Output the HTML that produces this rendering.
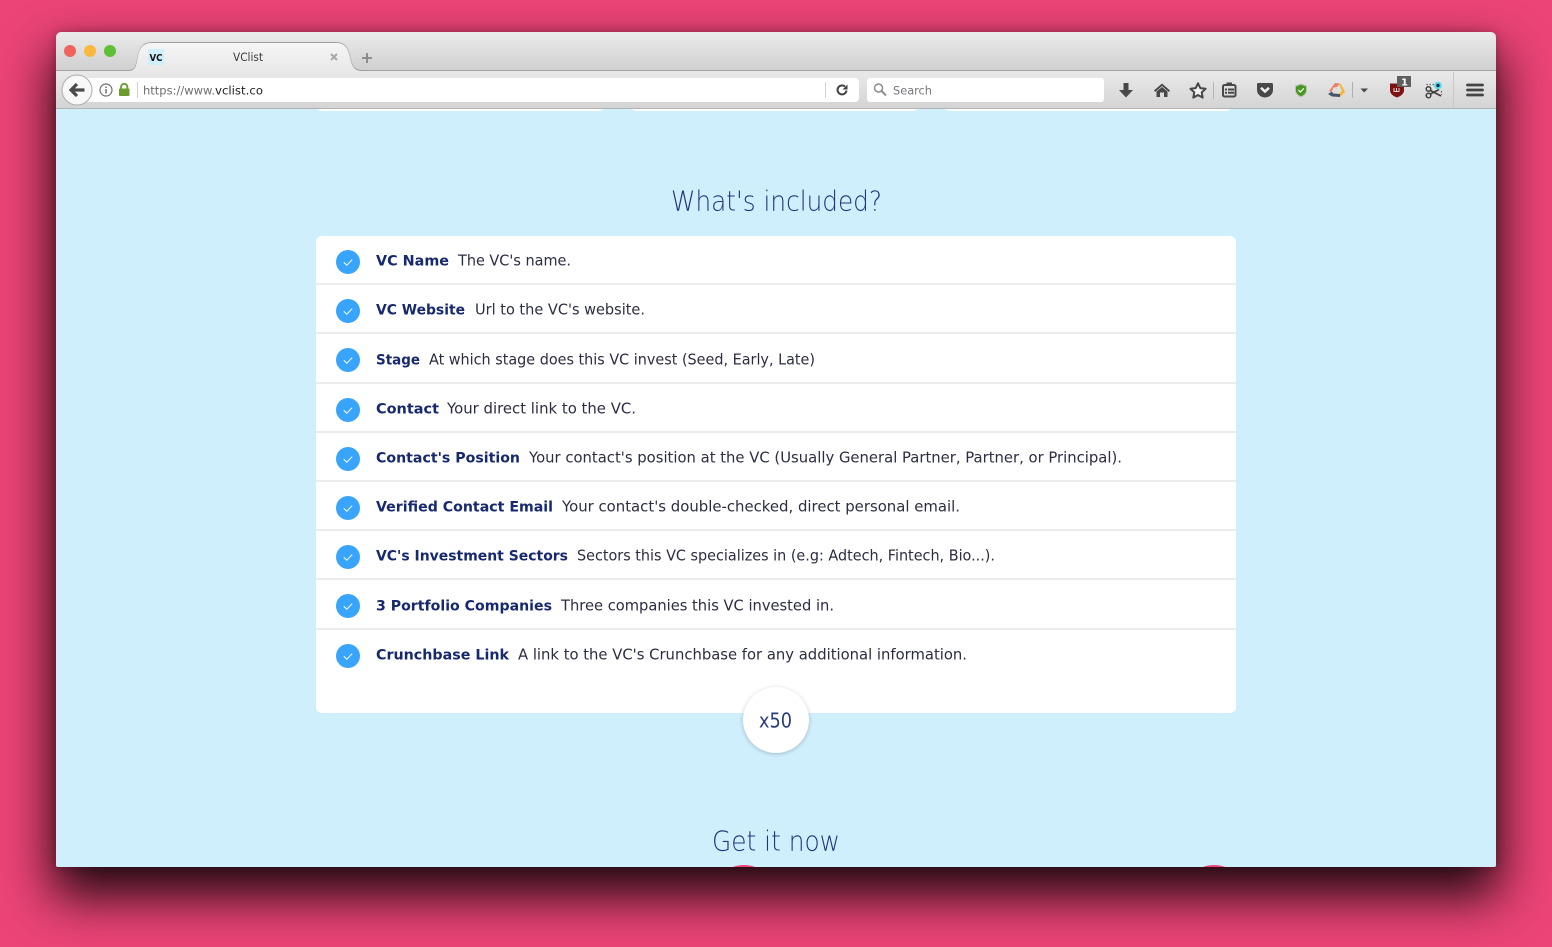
<!DOCTYPE html>
<html><head><meta charset="utf-8"><title>VClist</title>
<style>
html,body{margin:0;padding:0;width:1552px;height:947px;overflow:hidden;background:#ec4477}
#win{position:absolute;left:56px;top:32px;width:1440px;height:835px;border-radius:5px 5px 2px 2px;box-shadow:0 26px 50px 4px rgba(0,0,0,.86),0 0 10px rgba(60,0,20,.3)}
svg{position:absolute;left:0;top:0}
text{font-family:"DejaVu Sans","Liberation Sans",sans-serif}
.b{font-weight:700;font-size:14.5px;fill:#17296e}
.r{font-size:14.8px;fill:#2b2d42}
.h{font-size:27.5px;font-weight:200;fill:#22347a}
</style></head><body>
<div id="win"></div>
<svg width="1552" height="947" viewBox="0 0 1552 947">
<defs>
<linearGradient id="tb" x1="0" y1="0" x2="0" y2="1"><stop offset="0" stop-color="#ebebeb"/><stop offset="1" stop-color="#d0d0d0"/></linearGradient>
<linearGradient id="nb" x1="0" y1="0" x2="0" y2="1"><stop offset="0" stop-color="#eaeaea"/><stop offset="1" stop-color="#d4d4d4"/></linearGradient>
<linearGradient id="tab" x1="0" y1="0" x2="0" y2="1"><stop offset="0" stop-color="#f5f5f5"/><stop offset="1" stop-color="#e9e9e9"/></linearGradient>
<clipPath id="cw"><path d="M61 32H1491a5 5 0 0 1 5 5V865a2 2 0 0 1-2 2H58a2 2 0 0 1-2-2V37a5 5 0 0 1 5-5Z"/></clipPath>
<g id="chk"><circle r="12" fill="#38a4fb"/><path d="M-4.200 .3L-1.200 3.200L4.200-2.400" fill="none" stroke="#e8f4fe" stroke-width="1.100"/></g>
</defs>
<g clip-path="url(#cw)">
<rect x="56" y="109" width="1440" height="758" fill="#cfeffd"/>
<rect x="56" y="32" width="1440" height="38" fill="url(#tb)"/>
<rect x="56" y="70" width="1440" height="38" fill="url(#nb)"/>
<rect x="56" y="70" width="1440" height="1" fill="#9f9f9f"/>
<rect x="56" y="108" width="1440" height="1" fill="#b4b4b4"/>
<path d="M316 109H604L600 111H322Z" fill="#fff"/>
<path d="M630 109H918L914 111H636Z" fill="#fff"/>
<path d="M944 109H1231L1227 111H950Z" fill="#fff"/>
<ellipse cx="744" cy="873" rx="17" ry="8" fill="#ec4477"/>
<ellipse cx="1214" cy="873" rx="17" ry="8" fill="#ec4477"/>
</g>
<circle cx="70" cy="51" r="6" fill="#f0645c"/><circle cx="90" cy="51" r="6" fill="#f8b93c"/><circle cx="110" cy="51" r="6" fill="#5fc038"/>
<path d="M56 70.500H129C135 70.500 136 66 137 61C139 50 141 42.500 152 42.500H336C345 42.500 348 48 350 58C352 66 354 70.500 362 70.500H1496" fill="none" stroke="#a0a0a0"/>
<path d="M129 71C135 71 136 66 137 61C139 50 141 43 152 43H336C345 43 348 48 350 58C352 66 354 71 362 71Z" fill="url(#tab)"/>
<rect x="148" y="49" width="16" height="16" fill="#cfeffd"/>
<text x="149.500" y="61" font-size="10" font-weight="700" fill="#111" textLength="13" lengthAdjust="spacingAndGlyphs">VC</text>
<text x="233" y="61" font-size="11.500" fill="#3c3c3c" textLength="30" lengthAdjust="spacingAndGlyphs">VClist</text>
<path d="M331 54L337 60M337 54L331 60" stroke="#a8a8a8" stroke-width="2"/>
<path d="M367 53V63M362 58H372" stroke="#858585" stroke-width="1.800"/>
<path d="M80 78H855a4 4 0 0 1 4 4V98a4 4 0 0 1-4 4H80Z" fill="#fff"/>
<circle cx="77" cy="90" r="15" fill="#f8f8f8" stroke="#adadad"/>
<path d="M84.500 90H72M77 84L71 90L77 96" fill="none" stroke="#4a4a4a" stroke-width="3.200"/>
<circle cx="106" cy="90" r="6" fill="none" stroke="#707070" stroke-width="1.200"/>
<rect x="105.300" y="89" width="1.500" height="4.500" fill="#707070"/><rect x="105.300" y="86.500" width="1.500" height="1.500" fill="#707070"/>
<rect x="119" y="88.500" width="10.500" height="7.500" rx="1" fill="#6b9a2d"/>
<path d="M121 89V87a3.200 3.200 0 0 1 6.400 0V89" fill="none" stroke="#6b9a2d" stroke-width="1.800"/>
<rect x="137" y="82" width="1" height="16" fill="#cfcfcf"/>
<text x="143" y="94.500" font-size="11.800" fill="#6e6e6e" textLength="72" lengthAdjust="spacingAndGlyphs">https://www.</text>
<text x="215" y="94.500" font-size="11.800" fill="#1e1e1e" textLength="48" lengthAdjust="spacingAndGlyphs">vclist.co</text>
<rect x="825" y="82" width="1" height="16" fill="#d4d4d4"/>
<path d="M846.500 90.500a4.500 4.500 0 1 1-1.500-4" fill="none" stroke="#444" stroke-width="2"/>
<path d="M847.500 84.500V89.500H842.500Z" fill="#444"/>
<rect x="867" y="78" width="237" height="24" rx="3" fill="#fff"/>
<circle cx="878.500" cy="88" r="4" fill="none" stroke="#8c8c8c" stroke-width="1.500"/>
<path d="M881.500 91L886 95.500" stroke="#8c8c8c" stroke-width="2"/>
<text x="893" y="94.500" font-size="11.800" fill="#77777c" textLength="39" lengthAdjust="spacingAndGlyphs">Search</text>
<path d="M1123.500 83H1128.500V90H1133L1126 97.500L1119 90H1123.500Z" fill="#484848"/>
<path d="M1154 90.500L1162 83.500L1170 90.500L1168.800 92L1162 86L1155.200 92Z" fill="#484848"/><path d="M1156.500 91.500L1162 87L1167.500 91.500V97H1164V92.500H1160V97H1156.500Z" fill="#484848"/>
<path d="M1198 83.300L1200.300 88.100L1205.600 88.800L1201.700 92.400L1202.700 97.600L1198 95L1193.300 97.600L1194.300 92.400L1190.400 88.800L1195.700 88.100Z" fill="#f2f2f2" stroke="#484848" stroke-width="2" stroke-linejoin="round"/>
<rect x="1213" y="82" width="1" height="17" fill="#b5b5b5"/>
<rect x="1223" y="85" width="12.500" height="11.500" rx="1.500" fill="none" stroke="#484848" stroke-width="2"/>
<path d="M1226.500 82.500H1232V86H1226.500ZM1225 88.500H1227V90.500H1225ZM1228 88.500H1234V90.500H1228ZM1225 91.700H1227V93.700H1225ZM1228 91.700H1234V93.700H1228Z" fill="#484848"/>
<path d="M1258.500 83H1271.500a1.500 1.500 0 0 1 1.500 1.500V90a8 7.500 0 0 1-16 0V84.500a1.500 1.500 0 0 1 1.500-1.500Z" fill="#484848"/>
<path d="M1261 87.800L1265 91.500L1269 87.800" fill="none" stroke="#eee" stroke-width="2.500"/>
<path d="M1301 83.500L1307 85.800V90.500C1307 93.800 1304 96 1301 97.500C1298 96 1295 93.800 1295 90.500V85.800Z" fill="#b9c2b2"/>
<path d="M1301 84.800L1306 86.500V90.500C1306 93 1303.800 95 1301 96.300C1298.200 95 1296 93 1296 90.500V86.500Z" fill="#4a9622"/>
<path d="M1298.500 90L1300.500 92L1303.800 88.300" fill="none" stroke="#e8f6d8" stroke-width="1.300"/>
<path d="M1329 91L1335 83L1340 83.500L1337 87L1333.500 87.500L1331.500 92Z" fill="#ee7d6d"/>
<path d="M1339 84L1341 84L1345 92L1340 97L1339.500 93L1342 91Z" fill="#f6b62e"/>
<path d="M1328 94L1332 91.500L1333 93.500L1340 94V97L1332 96.500Z" fill="#45536b"/>
<rect x="1352" y="82" width="1" height="16" fill="#b0b0b0"/>
<path d="M1360.500 88.500H1368L1364.200 92.500Z" fill="#484848"/>
<path d="M1390 83.500H1404V90C1404 93.800 1401 96 1397 97.500C1393 96 1390 93.800 1390 90Z" fill="#7c1212"/>
<path d="M1394 88V91.500H1399V88M1396.500 88V91" fill="none" stroke="#e6cfcf" stroke-width="1"/>
<rect x="1397" y="76" width="14" height="11" fill="#5f5f5f"/>
<text x="1401" y="85.500" font-size="10" font-weight="700" fill="#fff">1</text>
<circle cx="1428.500" cy="95.500" r="2.300" fill="none" stroke="#3f3f3f" stroke-width="1.500"/>
<circle cx="1428.500" cy="89" r="2.300" fill="none" stroke="#3f3f3f" stroke-width="1.500"/>
<path d="M1430.500 90.500L1441 96M1430.500 94L1439 89.500" stroke="#3f3f3f" stroke-width="1.600"/>
<path d="M1426.500 84.500H1434M1441.500 91V95" stroke="#6c6c6c" stroke-width="1.300" stroke-dasharray="1.500 1.500" fill="none"/>
<circle cx="1438" cy="85.500" r="3.800" fill="#4fdcef"/><circle cx="1438" cy="85.500" r="1.700" fill="#1a2a4a"/>
<rect x="1453" y="72" width="1" height="35" fill="#c8c8c8"/>
<path d="M1467.500 85H1482.500M1467.500 90H1482.500M1467.500 95H1482.500" stroke="#444" stroke-width="2.800" stroke-linecap="round"/>
<text class="h" x="671" y="210.500" textLength="211" lengthAdjust="spacingAndGlyphs">What's included?</text>
<text class="h" x="712" y="850.500" textLength="128" lengthAdjust="spacingAndGlyphs">Get it now</text>
<rect x="316" y="236" width="920" height="477" rx="6" fill="#fff"/>
<g fill="#ececec">
<rect x="316" y="283" width="920" height="2"/><rect x="316" y="332" width="920" height="2"/><rect x="316" y="382" width="920" height="2"/><rect x="316" y="431" width="920" height="2"/><rect x="316" y="480" width="920" height="2"/><rect x="316" y="529" width="920" height="2"/><rect x="316" y="578" width="920" height="2"/><rect x="316" y="628" width="920" height="2"/>
</g>
<use href="#chk" x="348" y="262"/><use href="#chk" x="348" y="311"/><use href="#chk" x="348" y="360"/><use href="#chk" x="348" y="410"/><use href="#chk" x="348" y="459"/><use href="#chk" x="348" y="508"/><use href="#chk" x="348" y="557"/><use href="#chk" x="348" y="606"/><use href="#chk" x="348" y="656"/>
<text class="b" x="376" y="265.500" textLength="73" lengthAdjust="spacingAndGlyphs">VC Name</text><text class="r" x="458" y="265.500" textLength="113" lengthAdjust="spacingAndGlyphs">The VC's name.</text>
<text class="b" x="376" y="314.500" textLength="89" lengthAdjust="spacingAndGlyphs">VC Website</text><text class="r" x="475" y="314.500" textLength="170" lengthAdjust="spacingAndGlyphs">Url to the VC's website.</text>
<text class="b" x="376" y="364.500" textLength="44" lengthAdjust="spacingAndGlyphs">Stage</text><text class="r" x="429" y="364.500" textLength="386" lengthAdjust="spacingAndGlyphs">At which stage does this VC invest (Seed, Early, Late)</text>
<text class="b" x="376" y="413.500" textLength="63" lengthAdjust="spacingAndGlyphs">Contact</text><text class="r" x="447" y="413.500" textLength="189" lengthAdjust="spacingAndGlyphs">Your direct link to the VC.</text>
<text class="b" x="376" y="462.500" textLength="144" lengthAdjust="spacingAndGlyphs">Contact's Position</text><text class="r" x="529" y="462.500" textLength="593" lengthAdjust="spacingAndGlyphs">Your contact's position at the VC (Usually General Partner, Partner, or Principal).</text>
<text class="b" x="376" y="511.500" textLength="177" lengthAdjust="spacingAndGlyphs">Verified Contact Email</text><text class="r" x="562" y="511.500" textLength="398" lengthAdjust="spacingAndGlyphs">Your contact's double-checked, direct personal email.</text>
<text class="b" x="376" y="560.500" textLength="192" lengthAdjust="spacingAndGlyphs">VC's Investment Sectors</text><text class="r" x="577" y="560.500" textLength="418" lengthAdjust="spacingAndGlyphs">Sectors this VC specializes in (e.g: Adtech, Fintech, Bio...).</text>
<text class="b" x="376" y="610.500" textLength="176" lengthAdjust="spacingAndGlyphs">3 Portfolio Companies</text><text class="r" x="561" y="610.500" textLength="273" lengthAdjust="spacingAndGlyphs">Three companies this VC invested in.</text>
<text class="b" x="376" y="659.500" textLength="133" lengthAdjust="spacingAndGlyphs">Crunchbase Link</text><text class="r" x="518" y="659.500" textLength="449" lengthAdjust="spacingAndGlyphs">A link to the VC's Crunchbase for any additional information.</text>
<circle cx="776" cy="720" r="33" fill="#fff" style="filter:drop-shadow(0 1px 2px rgba(0,0,0,.22))"/>
<text x="759" y="727.500" font-size="20" fill="#2a3b7e" textLength="33" lengthAdjust="spacingAndGlyphs">x50</text>
</svg>
</body></html>
